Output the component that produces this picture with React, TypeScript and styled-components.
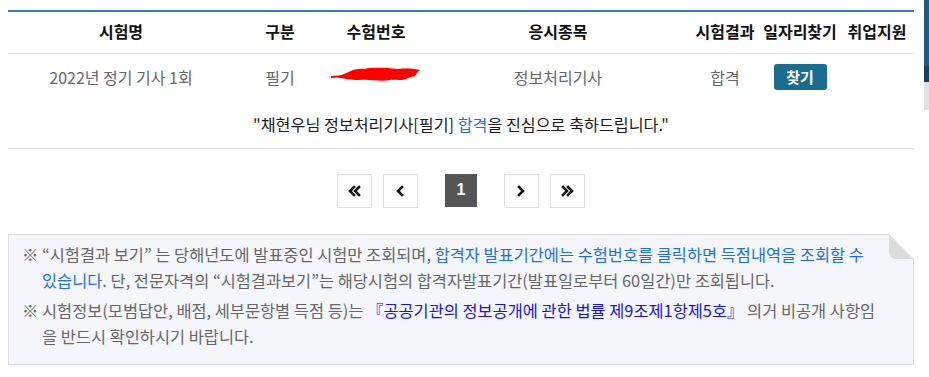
import styled, { createGlobalStyle } from 'styled-components';

const GlobalStyle = createGlobalStyle`
  html, body {
    margin: 0;
    padding: 0;
    background: #fff;
  }
  body {
    font-family: "Noto Sans CJK KR", "Noto Sans", sans-serif;
    color: #333;
  }
`;

const Page = styled.div`
  display: flex;
  width: 929px;
  min-height: 377px;
`;

const Main = styled.main`
  flex: 1;
  padding: 10px 10px 0 8px;
`;

const SideStrip = styled.div`
  width: 5px;
  display: flex;
  flex-direction: column;
`;

const StripPart = styled.div<{ $h: number; $c: string }>`
  height: ${(p) => p.$h}px;
  background: ${(p) => p.$c};
`;

const ResultTable = styled.table`
  width: 906px;
  border-collapse: collapse;
  table-layout: fixed;
  border-top: 2px solid #3a7bbf;
`;

const HeadCell = styled.th`
  height: 42px;
  padding: 0 0 3px;
  box-sizing: border-box;
  font-size: 16px;
  font-weight: 700;
  color: #111;
  text-align: center;
  white-space: nowrap;
  border-bottom: 1px solid #e0e0e0;
`;

const BodyCell = styled.td`
  height: 46px;
  padding: 0;
  font-size: 16px;
  color: #666;
  text-align: center;
  white-space: nowrap;
`;

const FindButton = styled.button`
  width: 53px;
  height: 26px;
  border: 0;
  border-radius: 3px;
  background: #1b6d8f;
  color: #fff;
  font-family: inherit;
  font-size: 15px;
  font-weight: 700;
  cursor: pointer;
`;

const Congrats = styled.p`
  margin: 0;
  height: 48px;
  display: flex;
  align-items: center;
  justify-content: center;
  font-size: 16.2px;
  font-weight: 400;
  color: #1a1a1a;
  border-bottom: 1px solid #e0e0e0;
`;

const Pass = styled.span`
  color: #1b6fd6;
`;

const Pager = styled.nav`
  display: flex;
  justify-content: center;
  align-items: center;
  padding: 25px 0 0;
  height: 34px;
`;

const PageGroup = styled.div`
  display: flex;
  gap: 11px;
`;

const PageBox = styled.a<{ $active?: boolean }>`
  width: ${(p) => (p.$active ? 32 : 35)}px;
  height: ${(p) => (p.$active ? 33 : 34)}px;
  box-sizing: border-box;
  display: flex;
  align-items: center;
  justify-content: center;
  border: ${(p) => (p.$active ? '0' : '1px solid #e2e2e2')};
  background: ${(p) => (p.$active ? '#555' : '#fff')};
  color: ${(p) => (p.$active ? '#fff' : '#111')};
  font-family: "Liberation Sans", Arial, sans-serif;
  font-size: 16px;
  font-weight: 700;
  margin: 0 ${(p) => (p.$active ? 16 : 0)}px;
`;

const Notice = styled.div`
  position: relative;
  margin-top: 26px;
  background: #f4f6fa;
  border: 1px solid #dedede;
  padding: 6px 30px 11px 13px;

  &::before {
    content: '';
    position: absolute;
    top: -1px;
    right: -1px;
    width: 0;
    height: 0;
    border-style: solid;
    border-width: 0 25px 25px 0;
    border-color: transparent #fff #dcdcdc transparent;
    border-bottom-left-radius: 7px;
  }
`;

const NoticeLine = styled.p`
  margin: 0 0 3px;
  padding-left: 20px;
  text-indent: -20px;
  font-size: 16.4px;
  line-height: 26.5px;
  color: #666;
  white-space: nowrap;
`;

const Mark = styled.span`
  display: inline-block;
  width: 20px;
  text-indent: 0;
`;

const Link = styled.span<{ $deep?: boolean }>`
  color: ${(p) => (p.$deep ? '#1a14d8' : '#1f6fe0')};
`;

const Chevron = ({ double, dir }: { double?: boolean; dir: 'l' | 'r' }) => {
  const pts = dir === 'l' ? 'M6 2 L2 6 L6 10' : 'M2 2 L6 6 L2 10';
  return (
    <svg width={double ? 14 : 9} height="12" viewBox={double ? '0 0 14 12' : '0 0 9 12'}>
      <path d={pts} fill="none" stroke="#111" strokeWidth="2.6" strokeLinecap="square" />
      {double && (
        <path
          d={pts}
          transform="translate(5 0)"
          fill="none"
          stroke="#111"
          strokeWidth="2.6"
          strokeLinecap="square"
        />
      )}
    </svg>
  );
};

export default function App() {
  return (
    <Page>
      <GlobalStyle />
      <Main>
        <ResultTable>
          <colgroup>
            <col style={{ width: 226 }} />
            <col style={{ width: 92 }} />
            <col style={{ width: 100 }} />
            <col style={{ width: 264 }} />
            <col style={{ width: 70 }} />
            <col style={{ width: 80 }} />
            <col style={{ width: 74 }} />
          </colgroup>
          <thead>
            <tr>
              <HeadCell>시험명</HeadCell>
              <HeadCell>구분</HeadCell>
              <HeadCell>수험번호</HeadCell>
              <HeadCell>응시종목</HeadCell>
              <HeadCell>시험결과</HeadCell>
              <HeadCell>일자리찾기</HeadCell>
              <HeadCell>취업지원</HeadCell>
            </tr>
          </thead>
          <tbody>
            <tr>
              <BodyCell>2022년 정기 기사 1회</BodyCell>
              <BodyCell>필기</BodyCell>
              <BodyCell>
                <svg width="92" height="22" viewBox="0 0 92 22">
                  <path
                    d="M6 14 C20 10 22 5 34 6 C44 4 56 5 68 6 C78 5 86 6 90 7 C84 11 88 14 80 14 C72 19 66 16 60 17 C50 19 40 16 30 17 C20 17 12 15 6 14 Z"
                    fill="#f00"
                  />
                  <path d="M1 14 L30 12" stroke="#f00" strokeWidth="2" />
                </svg>
              </BodyCell>
              <BodyCell>정보처리기사</BodyCell>
              <BodyCell>합격</BodyCell>
              <BodyCell>
                <FindButton>찾기</FindButton>
              </BodyCell>
              <BodyCell />
            </tr>
          </tbody>
        </ResultTable>

        <Congrats>
          "채현우님 정보처리기사[필기]&nbsp;<Pass>합격</Pass>을 진심으로 축하드립니다."
        </Congrats>

        <Pager>
          <PageGroup>
            <PageBox>
              <Chevron double dir="l" />
            </PageBox>
            <PageBox>
              <Chevron dir="l" />
            </PageBox>
            <PageBox $active>1</PageBox>
            <PageBox>
              <Chevron dir="r" />
            </PageBox>
            <PageBox>
              <Chevron double dir="r" />
            </PageBox>
          </PageGroup>
        </Pager>

        <Notice>
          <NoticeLine>
            <Mark>※</Mark>“시험결과 보기” 는 당해년도에 발표중인 시험만 조회되며,{' '}
            <Link>합격자 발표기간에는 수험번호를 클릭하면 득점내역을 조회할 수</Link>
            <br />
            <Link>있습니다.</Link> 단, 전문자격의 “시험결과보기”는 해당시험의 합격자발표기간(발표일로부터 60일간)만 조회됩니다.
          </NoticeLine>
          <NoticeLine>
            <Mark>※</Mark>시험정보(모범답안, 배점, 세부문항별 득점 등)는{' '}
            <Link $deep>『공공기관의 정보공개에 관한 법률 제9조제1항제5호』</Link> 의거 비공개 사항임
            <br />을 반드시 확인하시기 바랍니다.
          </NoticeLine>
        </Notice>
      </Main>
      <SideStrip>
        <StripPart $h={66} $c="#1c5c84" />
        <StripPart $h={16} $c="#16405f" />
        <StripPart $h={28} $c="#e2e2e2" />
      </SideStrip>
    </Page>
  );
}
